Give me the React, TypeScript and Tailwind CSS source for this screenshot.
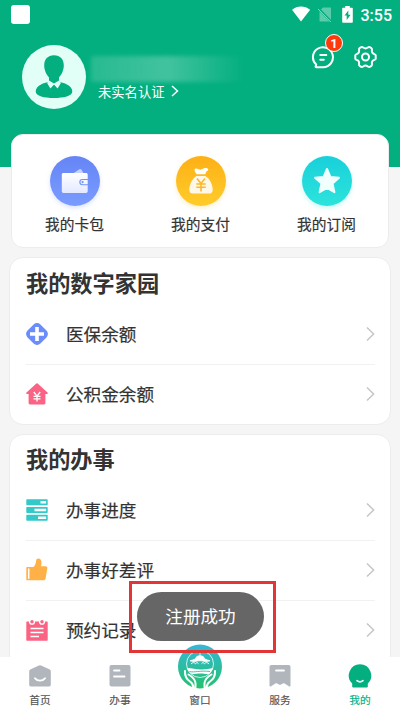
import type { ReactNode } from "react";

const FONT = "font-['Noto_Sans_CJK_SC','Noto_Sans',sans-serif]";

function Chevron() {
  return (
    <svg width="9" height="16" viewBox="0 0 9 16" fill="none" className="shrink-0">
      <path d="M1 1.5 7.6 8 1 14.5" stroke="#c6c6c6" strokeWidth="1.5" />
    </svg>
  );
}

function StatusBar() {
  return (
    <div className="flex h-7 items-center pt-0.5 pl-[11px] pr-2">
      <div className="-mt-0.5 h-[19px] w-[19px] rounded-[3px] bg-white" />
      <div className="ml-auto flex items-center">
        <svg width="20" height="16" viewBox="0 0 20 16" className="-mt-0.5">
          <path d="M1 3.8C6-.7 14-.7 19.2 3.8L10 15.6Z" fill="#fff" />
        </svg>
        <svg width="16" height="17" viewBox="0 0 16 17" className="-mt-0.5 ml-1.5">
          <path d="M6 1.5h8v14H2.5V5Z" fill="#fff" opacity=".35" />
          <path d="M1 2.2 14.5 16" stroke="#03af7f" strokeWidth="2.4" />
          <path d="M1 3 13.8 16" stroke="#fff" strokeWidth="1" opacity=".5" />
        </svg>
        <svg width="11" height="17" viewBox="0 0 11 17" className="-mt-0.5 ml-[9px]">
          <path d="M3.2 0h4.6v1.8H10a.8.8 0 0 1 .8.8v13.3a.8.8 0 0 1-.8.8H1a.8.8 0 0 1-.8-.8V2.6a.8.8 0 0 1 .8-.8h2.2Z" fill="#fff" />
          <path d="M6.3 4.5 2.5 9.6h2.2V14l3.9-5.3H6.3Z" fill="#03af7f" />
        </svg>
        <span className="ml-2 mt-0.5 font-[Roboto,sans-serif] text-[16px] font-medium leading-4 text-white">3:55</span>
      </div>
    </div>
  );
}

function Avatar() {
  return (
    <svg width="64" height="64" viewBox="0 0 64 64" className="shrink-0">
      <circle cx="32" cy="32" r="32" fill="#e1fff6" />
      <path d="M32 10.3c6.3 0 9.8 4.2 9.8 10.2 0 4.6-2.2 9.3-4.8 11.9v4.2c2 1.3 4.7 1.4 7.5 2.6 3.9 1.7 5.8 4.5 5.8 7.3 0 4.5-8.6 6.5-18.3 6.5s-18.300-2-18.300-6.500c0-2.800 1.900-5.600 5.800-7.300 2.800-1.200 5.500-1.300 7.500-2.600v-4.200c-2.600-2.600-4.800-7.300-4.800-11.900 0-6 3.500-10.200 9.800-10.200Z" fill="#03af7f" />
      <path d="m27 35.500-1.900 2.600 3.300 5.500 3.600-3.800 3.600 3.800 3.300-5.500-1.900-2.600-5 3.100Z" fill="#e1fff6" />
      <path d="m32 40-1.700 1.900 1.100 1.500-.9 6h3l-.9-6 1.100-1.500Z" fill="#03af7f" />
    </svg>
  );
}

function Header() {
  return (
    <header className="h-[167px] bg-[#03af7f]">
      <StatusBar />
      <div className="flex pl-[22px] pr-[23px] pt-[17px]">
        <Avatar />
        <div className="ml-[5px] w-[154px] pt-[11px]">
          {/* masked account name */}
          <div className="h-[26px] bg-gradient-to-r from-white/15 via-white/25 to-transparent blur-[2px]" />
          <div className="mt-0.5 flex items-center gap-2 pl-[7px]">
            <span className="text-[13.3px] leading-4 text-white">未实名认证</span>
            <svg width="8" height="12" viewBox="0 0 8 12" fill="none" className="-ml-px -mt-0.5">
              <path d="m1 1 5.500 5L1 11" stroke="#fff" strokeWidth="1.5" />
            </svg>
          </div>
        </div>
        <div className="ml-auto flex gap-[19px]">
          <div className="relative h-6 w-6">
            <svg width="24" height="24" viewBox="0 0 24 24" fill="none" stroke="#fff" strokeWidth="2" strokeLinecap="round" strokeLinejoin="round">
              <path d="M12.2 22.2H5.300c-.6 0-.9-.5-.6-1l.5-1.600A10 10 0 1 1 12.200 22.200Z" />
              <path d="M9.300 10h6M9.300 14.800h3.500" />
            </svg>
            <span className="absolute -top-[11px] left-[14px] flex h-[18px] w-[18px] items-center justify-center rounded-full border border-white bg-[#fc3a0a] font-[Roboto,sans-serif] text-[13px] font-bold leading-none text-white">
              1
            </span>
          </div>
          <svg width="23" height="24" viewBox="0 0 23 24" fill="none" stroke="#fff" strokeWidth="2" strokeLinejoin="round">
            <path d="M7.200 2.200C8.600 1.200 9.300 3.500 11.500 3.500s2.900-2.300 4.300-1.300l1.600.9c1.400.8-.2 2.700.8 4.500 1.100 1.900 3.500 1.200 3.500 2.700v3.400c0 1.500-2.400.8-3.500 2.700-1 1.800.6 3.700-.8 4.500l-1.600.9c-1.400 1-2.100-1.300-4.300-1.300s-2.900 2.300-4.300 1.300l-1.600-.9c-1.400-.8.2-2.700-.8-4.500-1.100-1.900-3.500-1.200-3.500-2.700v-3.400c0-1.500 2.400-.8 3.500-2.700 1-1.800-.6-3.700.8-4.500Z" />
            <circle cx="11.5" cy="12" r="3.5" />
          </svg>
        </div>
      </div>
    </header>
  );
}

function Shortcut({ label, cls, children }: { label: string; cls: string; children: ReactNode }) {
  return (
    <div className="flex w-[126px] shrink-0 flex-col items-center">
      <div className={`flex h-[50px] w-[50px] items-center justify-center rounded-full ${cls}`}>{children}</div>
      <span className="mt-2 text-[14.7px] leading-5 text-[#333] [-webkit-text-stroke:0.2px]">{label}</span>
    </div>
  );
}

function Shortcuts() {
  return (
    <section className="relative mx-[11px] -mt-[33px] flex h-[114px] justify-center rounded-[12px] border border-[#ececec] bg-white pt-[21px] pl-px">
      <Shortcut label="我的卡包" cls="bg-gradient-to-b from-[#6585f5] to-[#7a9cff] shadow-[0_2px_4px_rgba(110,145,255,0.25)]">
        <svg width="28" height="26" viewBox="0 0 28 26">
          <defs>
            <linearGradient id="wallet" x1="0" y1="0" x2="0" y2="1">
              <stop offset="0" stopColor="#fff" />
              <stop offset="1" stopColor="#e3e9ff" />
            </linearGradient>
          </defs>
          <path d="m11 6 7.500-4.800c.8-.5 1.500-.3 2 .5L23 6Z" fill="#c5d2ff" />
          <path d="M2.500 5H25c1.100 0 1.700.7 1.700 1.700v4.200h-5.200a3.200 3.200 0 0 0 0 6.400h5.200v6c0 1-.7 1.700-1.700 1.700H2.500c-1 0-1.700-.7-1.700-1.700V6.700c0-1 .7-1.700 1.700-1.700Z" fill="url(#wallet)" />
          <path d="M21.500 12h5.200v4.200h-5.200a2.100 2.100 0 0 1 0-4.200Z" fill="#f3f6ff" />
          <circle cx="21.6" cy="14.1" r="1.1" fill="#7291fa" />
        </svg>
      </Shortcut>
      <Shortcut label="我的支付" cls="bg-gradient-to-b from-[#fdb015] to-[#ffcc2a] shadow-[0_2px_4px_rgba(255,190,35,0.25)]">
        <svg width="26" height="28" viewBox="0 0 26 28">
          <path d="M8.500 7.300C7 4.700 5.800 2.800 7 1.800c1.600-1 3.200.5 4.700.8 2.300.3 3.600-1.600 5.900-1.500 2.200.1 3.600 1.500 2.200 2.300-1.600.8-2 2-2.500 3.900Z" fill="#fff" />
          <path d="M8.500 9h8.800c4.600 2.800 7.400 8.600 7.400 13.900 0 2.500-1.400 3.600-3.700 3.600H5C2.700 26.500 1.300 25.400 1.300 23 1.300 17.600 4 11.800 8.500 9Z" fill="#fff8e9" />
          <path d="m9 11.500 4 5 4-5M8.300 17h9.400M8.300 20.200h9.400M13 16.500v8" fill="none" stroke="#fdb82a" strokeWidth="1.6" />
        </svg>
      </Shortcut>
      <Shortcut label="我的订阅" cls="bg-gradient-to-b from-[#18d0da] to-[#2ce3dc] shadow-[0_2px_4px_rgba(40,220,220,0.25)]">
        <svg width="28" height="28" viewBox="0 0 28 28">
          <path d="m14 2 3.400 7.900 8.600.8-6.500 5.800 1.900 8.700L14 20.800l-7.400 4.400 1.900-8.700L2 10.700l8.600-.8Z" fill="#f1ffff" stroke="#f1ffff" strokeWidth="2" strokeLinejoin="round" />
        </svg>
      </Shortcut>
    </section>
  );
}

function Row({ icon, label, last }: { icon: ReactNode; label: string; last?: boolean }) {
  return (
    <div className={`flex h-[60px] items-center pb-0.5 ${last ? "" : "border-b border-[#f1f1f1]"}`}>
      <svg width="24" height="24" viewBox="0 0 24 24" className="-ml-px shrink-0">{icon}</svg>
      <span className="ml-[17px] flex-1 text-[17.6px] leading-6 text-[#333] [-webkit-text-stroke:0.2px]">{label}</span>
      <Chevron />
    </div>
  );
}

function Panel({ title, cls, children }: { title: string; cls: string; children: ReactNode }) {
  return (
    <section className={`mx-[9px] rounded-[14px] border border-[#ececec] bg-white pl-4 pr-[15px] ${cls}`}>
      <h2 className="flex items-center text-[22.2px] font-bold text-[#333]">{title}</h2>
      {children}
    </section>
  );
}

const medical = (
  <>
    <rect x="3.5" y="3.5" width="17" height="17" rx="4.2" transform="rotate(45 12 12)" fill="#6b8cfb" stroke="#6b8cfb" strokeWidth="1.2" />
    <path d="M12 5v14M5 12h14" stroke="#fff" strokeWidth="3.6" />
  </>
);

const house = (
  <>
    <path d="M10.800 1.900c.8-.8 1.600-.8 2.400 0l9.300 8.600c.7.7.4 1.500-.5 1.500h-1.600v9c0 .9-.5 1.400-1.400 1.400H5c-.9 0-1.400-.5-1.400-1.400v-9H2c-.9 0-1.200-.8-.5-1.500Z" fill="#fb6384" />
    <path d="m8.800 10 3.200 4.200 3.200-4.200M8.500 14.300h7M8.500 16.800h7M12 14v5.500" fill="none" stroke="#fff" strokeWidth="1.3" />
  </>
);

const progress = (
  <>
    <rect x="1.3" y="1.3" width="21.4" height="6" rx=".8" fill="#33c9c9" />
    <rect x="1.3" y="9" width="21.4" height="6" rx=".8" fill="#33c9c9" />
    <rect x="1.3" y="16.7" width="21.4" height="6" rx=".8" fill="#33c9c9" />
    <path d="M15.500 4.300h5.600M9.500 12h11.600M13 19.700h8.100" stroke="#fff" strokeWidth="2.6" />
  </>
);

const thumb = (
  <>
    <path d="M2.300 9h6.200c1.700-1.600 2.300-3.600 2.600-6.200.2-1.500 1-2.300 2.200-2.300 2.300 0 3.200 1.900 3.200 4.300 0 1.500-.3 2.500-.6 3.400h4.700c1.200 0 1.900.9 1.700 2l-1.700 10.300c-.2 1.200-1 1.800-2.100 1.800H2.300c-.7 0-1-.4-1-1V10c0-.6.400-1 1-1Z" fill="#ffb148" />
    <path d="M3.700 10.500v10.300" stroke="#fff" strokeWidth="1.5" />
  </>
);

const booking = (
  <>
    <path d="M2.300 3.500h19.400c.7 0 1 .4 1 1v17.200c0 .7-.3 1-1 1H2.300c-.7 0-1-.3-1-1V4.500c0-.6.300-1 1-1Z" fill="#fb6384" />
    <g stroke="#fff" fill="none" strokeWidth="1.4">
      <circle cx="7" cy="3.7" r="2.4" fill="#fb6384" />
      <circle cx="17" cy="3.7" r="2.4" fill="#fb6384" />
      <path d="M5.500 10.500h13M5.500 14.500h13M5.500 18.500h8.500" strokeWidth="1.6" />
    </g>
  </>
);

function Tab({ label, active, children }: { label: string; active?: boolean; children: ReactNode }) {
  return (
    <div className="flex w-20 flex-col items-center justify-end pb-[5px]">
      {children}
      <span className={`mt-[5px] text-[10.7px] leading-[14px] [-webkit-text-stroke:0.15px] ${active ? "text-[#03af7f]" : "text-[#555]"}`}>{label}</span>
    </div>
  );
}

function TabBar() {
  return (
    <nav className="relative flex h-[55px] shrink-0 bg-white">
      <Tab label="首页">
        <svg width="24" height="24" viewBox="0 0 24 24">
          <path d="M10.900 1.400a2.500 2.500 0 0 1 2.200 0l8.700 4.200c.7.4 1 .8 1 1.500v13.300c0 1.300-.8 2.100-2.100 2.100H3.300c-1.300 0-2.100-.8-2.100-2.100V7.100c0-.7.300-1.100 1-1.500Z" fill="#b1b6bd" />
          <path d="M7 14.300c2.800 3.200 7.200 3.200 10 0" fill="none" stroke="#fff" strokeWidth="1.8" strokeLinecap="round" />
        </svg>
      </Tab>
      <Tab label="办事">
        <svg width="24" height="24" viewBox="0 0 24 24">
          <rect x="1.5" y="1" width="21" height="21.5" rx="2" fill="#b1b6bd" />
          <path d="M6 6.500h5.500M6 12.500h10.500" stroke="#fff" strokeWidth="1.8" strokeLinecap="round" />
        </svg>
      </Tab>
      <Tab label="窗口">
        <svg width="44" height="45" viewBox="0 0 44 45" className="-mb-px shrink-0">
          <defs>
            <linearGradient id="hands" x1="0" y1="0" x2="0" y2="1">
              <stop offset="0" stopColor="#35b8d8" />
              <stop offset=".55" stopColor="#2bbd9d" />
              <stop offset="1" stopColor="#22c26c" />
            </linearGradient>
          </defs>
          <circle cx="22" cy="22.5" r="22" fill="url(#hands)" />
          <circle cx="22" cy="20" r="13.5" fill="none" stroke="#fff" strokeWidth=".8" />
          <path d="M22 9v3M18.500 12.800c2-1.500 5-1.500 7 0l1 2c2 1 4 1.600 5.500 2-3.500 1.200-6 .8-8 0h-4c-2 .8-4.500 1.200-8 0 1.500-.4 3.500-1 5.500-2Z" fill="#fff" stroke="#fff" strokeWidth=".8" />
          <path d="M13 20c1.500-1.800 3.300-1.800 4.500-.3 1-1.300 2-1.300 3 0M23.500 19.700c1-1.300 2-1.300 3 0 1.200-1.500 3-1.500 4.500.3" fill="none" stroke="#fff" strokeWidth="1" />
          <path d="M9 24c6 0 9 1.800 15 1.500 4-.2 8-.8 11-1.500-.8 2.700-2 4.200-4 6-3 .3-5.500-.5-9-.5-3 0-5 .8-8 .6-2.700-1.700-4.200-3.600-5-6.100Z" fill="#fff" />
          <path d="M11.500 27.500c5 1.300 10-1.300 20.500 0" fill="none" stroke="#2bbd9d" strokeWidth=".9" />
          {/* cupped hands either side of the stem */}
          <path d="M7 27c-.3 5.500 2 8.500 5 10.500 2 1.300 3.300 3 3.500 6M37 27c.3 5.500-2 8.500-5 10.500-2 1.300-3.300 3-3.500 6M10.500 30.500c3.500 2 6.500 4 7 8.500v4.500M33.500 30.500c-3.500 2-6.500 4-7 8.500v4.500" fill="none" stroke="#fff" strokeWidth="2" strokeLinecap="round" />
        </svg>
      </Tab>
      <Tab label="服务">
        <svg width="24" height="24" viewBox="0 0 24 24">
          <path d="M3.500 1h17c1.300 0 2 .7 2 2v18.500c0 1-.9 1.300-1.700.8L17 19.700c-1-.7-1.700-.6-2.700 0l-1.300.9c-.7.500-1.300.5-2 0l-1.300-.9c-1-.6-1.700-.7-2.700 0l-3.800 2.600c-.8.500-1.700.2-1.700-.8V3c0-1.300.7-2 2-2Z" fill="#b1b6bd" />
          <path d="M8 6.500h8" stroke="#fff" strokeWidth="1.8" strokeLinecap="round" />
        </svg>
      </Tab>
      <Tab label="我的" active>
        <svg width="24" height="24" viewBox="0 0 24 24">
          <path d="M12 .3a11.200 11.200 0 0 1 7.800 19.200v3a.9.9 0 0 1-.9.900H5.100a.9.9 0 0 1-.9-.9v-3A11.200 11.200 0 0 1 12 .3Z" fill="#03af7f" />
          <path d="M9 16.700c1.800 1.500 4.200 1.500 6 0" fill="none" stroke="#fff" strokeWidth="1.6" strokeLinecap="round" />
        </svg>
      </Tab>
    </nav>
  );
}

export default function App() {
  return (
    <div className={`relative flex h-[712px] w-[400px] flex-col overflow-hidden bg-[#f5f5f5] ${FONT}`}>
      <main className="min-h-0 flex-1 overflow-hidden">
        <Header />
        <Shortcuts />
        <Panel title="我的数字家园" cls="mt-[9px] h-[168px] [&>h2]:h-[47px] [&>h2]:pt-0.5">
          <Row icon={medical} label="医保余额" />
          <Row icon={house} label="公积金余额" last />
        </Panel>
        <Panel title="我的办事" cls="mt-[9px] h-[240px] [&>h2]:h-[46px] [&>h2]:pt-0.5">
          <Row icon={progress} label="办事进度" />
          <Row icon={thumb} label="办事好差评" />
          <Row icon={booking} label="预约记录" last />
        </Panel>
      </main>
      <TabBar />

      {/* toast inside its highlight frame */}
      <div className="absolute left-[129px] top-[581px] flex h-[72px] w-[147px] border-[3px] border-[#e23636] pl-[5px] pt-2">
        <div className="flex h-[49px] w-[127px] items-center justify-center rounded-full bg-[#666] text-[17.6px] text-white">
          注册成功
        </div>
      </div>
    </div>
  );
}
